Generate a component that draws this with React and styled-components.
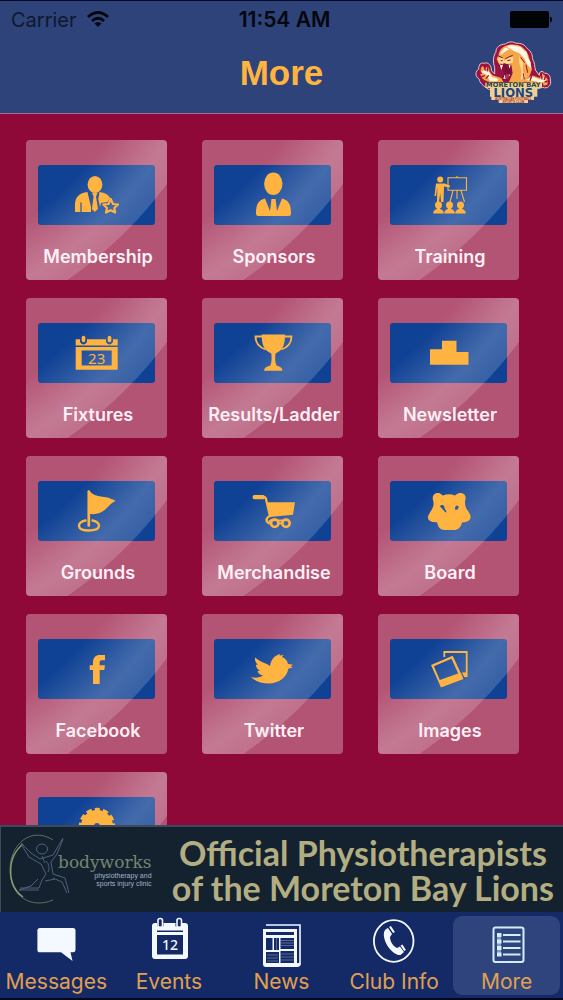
import React from "react";
import styled, { createGlobalStyle, css } from "styled-components";

const AMBER = "#ffb340";

const GlobalStyle = createGlobalStyle`
  * {
    box-sizing: border-box;
  }

  body {
    margin: 0;
    background-color: #8e0937;
    font-family: Inter, "Liberation Sans", sans-serif;
  }

  button {
    border: 0;
    margin: 0;
    background: none;
    font-family: inherit;
    cursor: pointer;
  }
`;

const Page = styled.div`
  height: 100vh;
  display: flex;
  flex-flow: column nowrap;
  border-top: 1px solid #050a26;
  border-bottom: 2px solid #04081c;
  background-color: #8e0937;
`;

const Header = styled.header`
  flex: none;
  border-bottom: 1px solid #a86a96;
  background-color: #2d437a;
`;

const StatusBar = styled.div`
  height: 37px;
  padding: 0 11px;
  display: grid;
  grid-template-columns: 1fr auto 1fr;
  align-items: center;
  color: #05070d;
`;

const Carrier = styled.span`
  display: flex;
  align-items: center;
  gap: 10px;
  font-size: 20px;
  color: #10182e;
`;

const Clock = styled.span`
  padding-left: 6px;
  font-size: 21px;
  font-weight: 600;
`;

const Battery = styled.svg`
  justify-self: end;
`;

const TitleBar = styled.div`
  height: 75px;
  padding: 0 11px 6px;
  display: grid;
  grid-template-columns: 1fr auto 1fr;
  align-items: center;
`;

const Title = styled.h1`
  grid-column: 2;
  margin: 0;
  color: ${AMBER};
  font-family: "Liberation Sans", sans-serif;
  font-size: 35px;
  font-weight: 700;
  line-height: 40px;
`;

const ClubLogo = styled.svg`
  justify-self: end;
`;

const Menu = styled.main`
  flex: 1;
  min-height: 0;
  overflow-y: auto;
  scrollbar-width: none;
  padding: 26px 44px 18px 26px;
`;

const TileGrid = styled.div`
  display: grid;
  grid-template-columns: repeat(3, minmax(0, 1fr));
  gap: 18px 35px;
`;

const Tile = styled.button`
  position: relative;
  padding: 25px 12px 12px;
  display: flex;
  flex-flow: column nowrap;
  align-items: center;
  gap: 21px;
  overflow: hidden;
  border-radius: 4px;
  background-color: #b35474;

  /* curved shine across the tile */
  &::before {
    content: "";
    position: absolute;
    inset: 0;
    background: radial-gradient(
      circle at -196px -206px,
      rgba(255, 255, 255, 0) 345px,
      rgba(255, 255, 255, 0.18) 385px,
      rgba(255, 255, 255, 0.22) 396px,
      rgba(255, 255, 255, 0.17) 419px,
      rgba(255, 255, 255, 0) 420px
    );
  }
`;

const TileFace = styled.span`
  align-self: stretch;
  height: 60px;
  display: flex;
  align-items: center;
  justify-content: center;
  border-radius: 3px;
  background-color: #0f4194;
`;

const TileIcon = styled.svg`
  z-index: 1;
  position: relative;
  fill: ${AMBER};
  color: ${AMBER};
`;

const TileLabel = styled.span`
  z-index: 1;
  padding-left: 3px;
  color: #fff0f6;
  font-size: 18px;
  font-weight: 600;
  line-height: 22px;
  white-space: nowrap;
`;

const Banner = styled.a`
  flex: none;
  height: 87px;
  padding: 0 9px 0 8px;
  display: flex;
  align-items: center;
  justify-content: space-between;
  border-top: 2px solid #3d4a5c;
  border-left: 1px solid #3d4a5c;
  background-color: #14212f;
  text-decoration: none;
`;

const Sponsor = styled.span`
  display: flex;
  align-items: center;
`;

const SponsorName = styled.span`
  margin-left: -11px;
  display: flex;
  flex-flow: column nowrap;
  align-items: flex-end;
  color: #75866f;
  font-family: "DejaVu Serif", serif;
  font-size: 17px;
  line-height: 20px;
`;

const SponsorNote = styled.small`
  color: #a3b3c9;
  font-family: "Liberation Sans", sans-serif;
  font-size: 7px;
  line-height: 8px;
  text-align: right;
`;

const BannerText = styled.span`
  color: #b3ae82;
  font-family: Lato, sans-serif;
  font-size: 34px;
  font-weight: 700;
  line-height: 35px;
  text-align: center;
  white-space: nowrap;
`;

const TabBar = styled.nav`
  flex: none;
  height: 86px;
  display: grid;
  grid-template-columns: repeat(5, minmax(0, 1fr));
  background-color: #142a66;
`;

const Tab = styled.button`
  margin: 4px 3px;
  padding: 1px 0 0;
  display: flex;
  flex-flow: column nowrap;
  align-items: center;
  border-radius: 9px;
  color: #e0a050;
  font-size: 21px;
  line-height: 26px;
  white-space: nowrap;

  ${({ $active }) => $active && css`
    background-color: #2f447c;
  `}
`;

const TabIcon = styled.svg`
  flex: none;
  color: #f4f8ff;
`;

const stroke = (width) => ({
  fill: "none",
  stroke: "currentColor",
  strokeWidth: width,
});

const icons = {
  membership: (
    <>
      <ellipse cx="22" cy="13.5" rx="7.4" ry="8.6" />
      <path d="M2 41V34C2 26 6 22 14.5 21L18 36V41H8.6V31.5H7.4V41Z" />
      <path d="M19 22H24.5L23 25.5L25 38L21.7 41L18.9 38L20.6 25.5Z" />
      <path d="M26.5 21C32 21.5 35.5 23.5 37 27L34.5 31L28 32L27 36L25.3 28Z" />
      <path d="M37.7 28L40 33L45 33.5L41.3 37L42.3 41.5L37.7 39.2L33 41.5L34 37L30.3 33.5L35.5 33Z" {...stroke(2.2)} strokeLinejoin="round" />
    </>
  ),
  sponsors: (
    <>
      <ellipse cx="24.3" cy="12.7" rx="9.2" ry="11.3" />
      <path d="M7 42.5C7 33 9.5 29.5 16 27.5L21 40L22.5 28H26.6L28 40L33 27.5C39.5 29.5 42 33 42 42.5Q42 45 39.5 45H9.5Q7 45 7 42.5Z" />
    </>
  ),
  training: (
    <>
      <circle cx="15.2" cy="8.5" r="3" />
      <path d="M11 12.5H19.5L25 14.5L24.5 16.5L19 15.5L18.5 31H16L15.2 22L14 31H12L12.3 16L11 25H9.5Z" />
      <path d="M23 6.8H41.5V19.3H23ZM32 5V7M28 19.5L25 31M32 19.5V28M36 19.5L39.5 31" {...stroke(1.1)} />
      {[13.5, 24.5, 35.5].map((x) => (
        <g key={x}>
          <circle cx={x} cy="34" r="3.5" />
          <path d={`M${x - 5.3} 42.5Q${x - 5.3} 39 ${x - 1.7} 38V36H${x + 1.7}V38Q${x + 5.3} 39 ${x + 5.3} 42.5Z`} />
        </g>
      ))}
    </>
  ),
  fixtures: (
    <>
      <path d="M2.7 10.3H7V13Q10.5 18 14 13V10.3H33V13Q36.5 18 40 13V10.3H44.7V16.5H2.7Z" />
      <rect x="8.7" y="6.8" width="3.6" height="6.5" rx="1.8" />
      <rect x="34.7" y="6.8" width="3.6" height="6.5" rx="1.8" />
      <path fillRule="evenodd" d="M2.7 18H44.7V40.8H2.7ZM8.7 21.5V36.5H38.7V21.5Z" />
      <text x="23.7" y="34.5" textAnchor="middle" fontFamily="Noto Sans, sans-serif" fontSize="15">23</text>
    </>
  ),
  trophy: (
    <>
      <path d="M12.7 5.5H36C36 15 34.5 21 26.5 24.5C26 29 26 33 27.5 36.5Q33.5 38 33.5 41.7H15Q15 38 21.3 36.5C22.8 33 22.8 29 22.3 24.5C14.5 21 12.7 15 12.7 5.5Z" />
      <path d="M13 7.5H6.5C6.5 14 9.5 18 16.5 20.5M36 7.5H42.5C42.5 14 39.5 18 32.5 20.5" {...stroke(1.8)} />
    </>
  ),
  podium: <path d="M5 20.3H17V11.7H31.5V23H43.5V35.7H5Z" />,
  lion: (
    <path
      fillRule="evenodd"
      d="M8 13C6.5 8 11 5 15 6.5C17 7.5 17.5 8.5 18 8.5Q24 6 30 8.5C31 8 31.5 7 33 6.5C37.5 5 42 8 40.3 13C39.7 16 40 19 41.5 22C44 25 46 28 45.5 31C44.5 35 40 35 37 35.5C36 41 32 43.5 28 43H20C15 43 13 40 12.3 35.5C8 35 3.5 35 3 31C3 27 6 25 7 22C9 19 8.8 16 8 13ZM15 19.5C16.5 17 19.5 18 19.3 20.5L21.8 25.5L20 25L17 21.5ZM30 22.5C30 19 31.5 17.5 33.5 19.5C34 22 32 23.5 30 22.5Z"
    />
  ),
  flag: (
    <>
      <path d="M15.8 4.5V38.5" {...stroke(2.7)} strokeLinecap="round" />
      <path d="M17 4.5C24 12 31 7 42.7 14C34 17 33 28.5 17 27Z" />
      <path d="M12.5 33.5C3 35.5 3.5 43.5 15.8 43.5C28.5 43.5 29 35.5 19.5 33.5" {...stroke(2.4)} strokeLinecap="round" />
    </>
  ),
  cart: (
    <>
      <path d="M5 10H14.5Q16.5 10 17 12L21 29C15.5 31.5 17 36 22 36.5" {...stroke(2.3)} />
      <rect x="3.7" y="8" width="12" height="4.3" rx="1.5" />
      <path d="M18.3 15.3H46L44 27.7L20.7 30Z" />
      <path d="M20 34.5Q24 31 29 33.5H34" {...stroke(1.8)} />
      <circle cx="25.7" cy="36.3" r="3.7" {...stroke(2.6)} />
      <circle cx="37" cy="36.3" r="3.7" {...stroke(2.6)} />
      <path d="M29 36.3H34" {...stroke(2)} />
    </>
  ),
  facebook: (
    <path d="M20 39V25H16.7V20.3H20V17.5C20 12.5 22.5 10 27 10H32V15.3H29C27.2 15.3 26.7 16 26.7 17.5V20.3H32L31.3 25H26.7V39Z" />
  ),
  twitter: (
    <path d="M2 32C7 33.5 11 32.5 14 30.5C10.5 30 9 28 8.5 26L11 25.8C8 24 6.8 22 7 19.5L9 20C6.5 17.5 5.5 15 6.2 12.5C11 17 16 17.5 21 21C22 15 25 10.5 31.3 9L30.5 10.8L34.5 9.8L33 12C36 13 38 15 39 19L44 19.7L41.5 21.5L44 22.5L39.5 23.5C38 32 30 38.5 20 38.5C12 38.5 6 36 2 32Z" />
  ),
  photos: (
    <>
      <path d="M19.3 12V7H41.7V31H38" {...stroke(1.8)} />
      <path d="M35.5 27.5H41.5V31.5H38Z" />
      <path fillRule="evenodd" d="M6 20L27.7 10.7L38.5 34L16 42.5ZM8.9 21.3L14.8 35L33.2 28.5L26.5 13.8Z" />
      <path d="M29.5 12L39.7 34.5" fill="none" stroke="#2a5aa3" strokeWidth="1" />
    </>
  ),
  gear: (
    <>
      <circle cx="24" cy="23" r="9.5" {...stroke(13)} />
      <circle cx="24" cy="23" r="16.2" {...stroke(4)} strokeDasharray="5.4 3.08" strokeDashoffset="2.7" transform="rotate(-90 24 23)" />
    </>
  ),
  chat: (
    <path d="M8 11H41Q43.5 11 43.5 13.5V33Q43.5 35.3 41 35.3H38.5L40.5 44L29 35.3H8Q5.4 35.3 5.4 33V13.5Q5.4 11 8 11Z" fill="currentColor" />
  ),
  calendar: (
    <>
      <path fillRule="evenodd" fill="currentColor" d="M10 6H12V9.5H18.5V6H30.5V9.5H37V6H40Q43 6 43 9V39Q43 42 40 42H10Q7 42 7 39V9Q7 6 10 6ZM12 13.5V15H38V13.5ZM12 18V37.5H38V18Z" />
      <rect x="13" y="1.5" width="4.5" height="9" rx="2" {...stroke(1.6)} />
      <rect x="32" y="1.5" width="4.5" height="9" rx="2" {...stroke(1.6)} />
      <text x="25" y="33" textAnchor="middle" fill="currentColor" fontFamily="Noto Sans, sans-serif" fontWeight="500" fontSize="14">12</text>
    </>
  ),
  newspaper: (
    <>
      <path d="M9 8H43V46" {...stroke(1.6)} />
      <path fillRule="evenodd" fill="currentColor" d="M6 12H40V46H44Q44 50 40 50H9Q6 50 6 47ZM9 15V18H37V15ZM9 21V33H15.5V21ZM9 35V46H22V35ZM17 21V33H22V21ZM23.5 21V32H37V21ZM23.5 34V46H37V34Z" />
      <path d="M24 23.5H37M24 26H37M24 28.5H37M24 37H37M24 40H37M24 43H37M10 38H21M10 41H21M10 44H21M19.5 21V33" {...stroke(1)} opacity="0.3" />
    </>
  ),
  phone: (
    <>
      <ellipse cx="23.7" cy="24" rx="19.8" ry="20.8" {...stroke(1.8)} />
      <path d="M18 11L22 17L20 20C20 25 23.5 29.5 27 31L30 29.5L34 35L30.5 38C25 39 14.5 29 13.8 18C13.8 14 15 12 18 11Z" fill="currentColor" />
      <path d="M20 9.5L24 15.5M31.5 28L35 33.5" {...stroke(2.2)} />
    </>
  ),
  list: (
    <g color="#d3edfa">
      <rect x="10.5" y="10.5" width="30" height="34.5" rx="2" {...stroke(2)} />
      <path d="M14 16H18V39H14Z" fill="currentColor" opacity="0.5" />
      <path d="M14 18H18.5M14 24.5H18.5M14 31H18.5M14 37.5H18.5" {...stroke(4)} />
      <path d="M20 18H37.5M20 24.5H37.5M20 31H37.5M20 37.5H37.5" {...stroke(2)} />
    </g>
  ),
};

const tiles = [
  { label: "Membership", icon: "membership" },
  { label: "Sponsors", icon: "sponsors" },
  { label: "Training", icon: "training" },
  { label: "Fixtures", icon: "fixtures" },
  { label: "Results/Ladder", icon: "trophy" },
  { label: "Newsletter", icon: "podium" },
  { label: "Grounds", icon: "flag" },
  { label: "Merchandise", icon: "cart" },
  { label: "Board", icon: "lion" },
  { label: "Facebook", icon: "facebook" },
  { label: "Twitter", icon: "twitter" },
  { label: "Images", icon: "photos" },
  { label: "", icon: "gear" },
];

const tabs = [
  { label: "Messages", icon: "chat" },
  { label: "Events", icon: "calendar" },
  { label: "News", icon: "newspaper" },
  { label: "Club Info", icon: "phone" },
  { label: "More", icon: "list" },
];

const LionsLogo = () => (
  <ClubLogo width="77" height="63" viewBox="45 33 231 189">
    {/* outline of arms and mane */}
    <path
      d="M104 112C98 96 100 76 108 66C106 52 122 42 136 42C146 34 160 34 168 40C184 38 196 46 202 56C214 64 218 76 217 86C225 98 224 110 226 120L238 136C236 124 248 120 254 130C266 128 272 140 271 150C276 166 262 178 248 172L226 178H86C70 168 58 158 58 148C44 140 46 122 56 118C56 104 62 96 72 100C84 94 96 108 94 122L104 132Z"
      fill="#9c1240" stroke="#e8c4d0" strokeWidth="3" strokeLinejoin="round"
    />
    <path d="M118 66C124 50 142 42 164 44C188 44 206 66 209 90L216 118L208 140L190 158H146L158 130L154 104L118 104L110 88Z" fill="#f6a64a" />
    {/* pale locks of the mane */}
    <path d="M140 50C150 44 158 44 166 48L182 50L190 60L200 66L204 84L212 96L213 116L202 104L192 84L178 70L160 62Z" fill="#fff6e4" />
    <path d="M122 66L136 52L148 58L134 66L122 76Z" fill="#fff6e4" />
    <path d="M176 76L190 98L188 122L198 140L182 150L184 124L178 100Z" fill="#ffd58a" />
    <path d="M182 82L194 98M198 104L203 128M190 130L193 148" fill="none" stroke="#9c1240" strokeWidth="3" />
    {/* brow, nose and muzzle */}
    <path d="M114 84L126 82L134 92L144 82L160 82L158 98L140 102L116 98Z" fill="#ffd991" />
    <path d="M112 76L128 84M136 86L158 76M122 92L128 92M142 92L152 90" stroke="#7d1034" strokeWidth="3" />
    {/* open mouth */}
    <path d="M116 106L134 100L152 106L156 122L148 146L126 150L134 126Z" fill="#7e1038" />
    <path d="M120 106L124 120L129 104ZM146 105L148 116L152 106ZM130 146L134 134L138 146ZM144 142L147 132L150 136Z" fill="#ffffff" />
    <path d="M134 144Q140 122 148 138L144 146Z" fill="#b53256" />
    {/* paws */}
    <path d="M62 124C62 106 72 104 74 118C80 104 90 110 88 124L98 136L124 144L130 156H88C76 152 58 148 62 124Z" fill="#f6a64a" />
    <path d="M64 126L72 120L86 124L96 140L116 148L112 154H90L80 136Z" fill="#fff3dc" />
    <path d="M54 126L66 130M62 142L74 136M72 106L76 122M84 110L82 124M78 146L86 136" stroke="#9c1240" strokeWidth="4" />
    <path d="M190 154L216 136L240 144L246 130L256 138L264 150L262 164L248 168L232 160L210 160Z" fill="#f6a64a" />
    <path d="M196 150L218 140L238 148L252 142L258 152L244 160L226 154Z" fill="#fff3dc" />
    <path d="M244 132L246 148M258 136L252 150M268 152L254 156M250 170L246 158M216 134L210 152" stroke="#9c1240" strokeWidth="4" />
    {/* lettering */}
    <path d="M76 158H246V174H232V200H222V210H204V219H116V210H94V200H90V174H76Z" fill="#f0cf94" />
    <text x="160" y="172" textAnchor="middle" fill="#1c4a42" fontFamily="DejaVu Sans, sans-serif" fontWeight="700" fontSize="20">MORETON BAY</text>
    <text x="160" y="200" textAnchor="middle" fill="#1b4584" fontFamily="DejaVu Sans, sans-serif" fontWeight="700" fontSize="35">LIONS</text>
    <text x="160" y="209" textAnchor="middle" fill="#b1331f" fontFamily="Liberation Sans, sans-serif" fontWeight="700" fontSize="9">AUSTRALIAN FOOTBALL</text>
    <text x="160" y="218" textAnchor="middle" fill="#b1331f" fontFamily="Liberation Sans, sans-serif" fontWeight="700" fontSize="9">SPORTS CLUB</text>
  </ClubLogo>
);

const BodyworksLogo = () => (
  <svg width="60" height="76" viewBox="0 0 60 76" fill="none">
    <path d="M44 8C22 -6 1 12 1 38C1 62 20 78 44 68" stroke="#5d6d60" strokeWidth="1" />
    <path d="M14 12C-3 26 -2 54 14 65" stroke="#8a9a72" strokeWidth="1.5" />
    <g stroke="#4d617b" strokeWidth="1">
      <ellipse cx="33" cy="17" rx="5.5" ry="5" />
      <path d="M12 11L22 21L31 27L44 23L54 6M12 12L20 25L32 32L37 42L33 48L30 56L11 56M54 7L48 22L42 30L44 42L56 46L60 61M30 58L10 58L22 54L29 47M44 46L53 50L58 61M36 49L46 47M37 29Q42 34 39 40M33 24L36 31" />
    </g>
  </svg>
);

const App = () => {
  return (
    <>
      <GlobalStyle />
      <Page>
        <Header>
          <StatusBar>
            <Carrier>
              Carrier
              <svg width="22" height="17" viewBox="0 0 22 17" fill="none" stroke="#05070d" strokeWidth="2.8">
                <path d="M1 6Q11 -3 21 6M5 10Q11 4.5 17 10" />
                <path d="M11 16L7.5 12.5Q11 9.5 14.5 12.5Z" fill="#05070d" stroke="none" />
              </svg>
            </Carrier>
            <Clock>11:54 AM</Clock>
            <Battery width="42" height="17" viewBox="0 0 42 17" fill="#020305">
              <rect width="39" height="17" rx="2" />
              <path d="M40 5.5Q42 6 42 8.5Q42 11 40 11.5Z" />
            </Battery>
          </StatusBar>
          <TitleBar>
            <Title>More</Title>
            <LionsLogo />
          </TitleBar>
        </Header>

        <Menu>
          <TileGrid>
            {tiles.map(({ label, icon }) => (
              <Tile key={icon} type="button" aria-label={label || icon}>
                <TileFace>
                  <TileIcon width="48" height="48" viewBox="0 0 48 48">{icons[icon]}</TileIcon>
                </TileFace>
                <TileLabel>{label || "\u00a0"}</TileLabel>
              </Tile>
            ))}
          </TileGrid>
        </Menu>

        <Banner href="#bodyworks">
          <Sponsor>
            <BodyworksLogo />
            <SponsorName>
              bodyworks
              <SponsorNote>
                physiotherapy and
                <br />
                sports injury clinic
              </SponsorNote>
            </SponsorName>
          </Sponsor>
          <BannerText>
            Official Physiotherapists
            <br />
            of the Moreton Bay Lions
          </BannerText>
        </Banner>

        <TabBar>
          {tabs.map(({ label, icon }) => (
            <Tab key={label} type="button" $active={label === "More"}>
              <TabIcon width="48" height="52" viewBox="0 0 48 52">{icons[icon]}</TabIcon>
              {label}
            </Tab>
          ))}
        </TabBar>
      </Page>
    </>
  );
};

export default App;
